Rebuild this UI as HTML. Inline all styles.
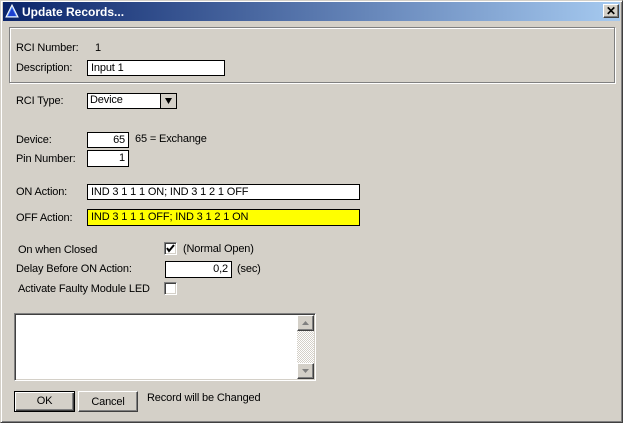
<!DOCTYPE html>
<html><head><style>
*{margin:0;padding:0;box-sizing:border-box}
body{width:623px;height:423px;background:#d4d0c8;font-family:"Liberation Sans",Arial,sans-serif;font-size:11px;letter-spacing:-0.15px;color:#000;position:relative;overflow:hidden}
.a{position:absolute;white-space:nowrap}
.win{position:absolute;left:0;top:0;width:623px;height:423px;border-top:1px solid #d4d0c8;border-left:1px solid #d4d0c8;border-right:1px solid #404040;border-bottom:1px solid #404040;box-shadow:inset 1px 1px #fff,inset -1px -1px #808080}
.title{position:absolute;left:3px;top:2px;width:617px;height:19px;background:linear-gradient(to right,#0a246a,#a6caf0);color:#fff;font-weight:bold;font-size:12px;letter-spacing:0}
.in{position:absolute;background:#fff;border-top:1px solid #808080;border-left:1px solid #808080;border-right:1px solid #fff;border-bottom:1px solid #fff;box-shadow:inset 1px 1px #404040,inset -1px -1px #d4d0c8}
.f{position:absolute;background:#fff;border:1px solid #000;padding:1px 3px;line-height:13px}
.btn{position:absolute;background:#d4d0c8;border-top:1px solid #fff;border-left:1px solid #fff;border-right:1px solid #404040;border-bottom:1px solid #404040;box-shadow:inset -1px -1px #808080;text-align:center;line-height:17px}
.cb{position:absolute;width:13px;height:13px;background:#fff;border-top:1px solid #808080;border-left:1px solid #808080;border-right:1px solid #fff;border-bottom:1px solid #fff;box-shadow:inset 1px 1px #404040,inset -1px -1px #d4d0c8}
</style></head><body>
<div class="win"></div>
<div class="title"><svg class="a" style="left:2px;top:2px" width="14" height="14"><polygon points="7,1 13,13 1,13" fill="#6aa0ff" stroke="#fff" stroke-width="1"/><polygon points="7,4 11,12 3,12" fill="#1c3fcf"/></svg><span class="a" style="left:19px;top:3px">Update Records...</span>
<div class="btn" style="left:600px;top:2px;width:16px;height:14px;line-height:12px;color:#000;font-size:12px">✕</div></div>
<div class="a" style="left:9px;top:27px;width:606px;height:56px;border:1px solid #808080;box-shadow:1px 1px #fff,inset 1px 1px #fff"></div>
<span class="a" style="left:16px;top:42px">RCI Number:</span><span class="a" style="left:95px;top:42px">1</span>
<span class="a" style="left:16px;top:62px">Description:</span>
<div class="f" style="left:87px;top:60px;width:138px;height:16px">Input 1</div>
<span class="a" style="left:16px;top:95px">RCI Type:</span>
<div class="f" style="left:87px;top:93px;width:90px;height:16px;padding:0 2px">Device</div>
<div class="a" style="left:160px;top:94px;width:16px;height:14px;border-left:1px solid #000;background:#d4d0c8"><svg width="16" height="14"><polygon points="4,4 11,4 7.5,10" fill="#000"/></svg></div>
<span class="a" style="left:16px;top:134px">Device:</span>
<div class="f" style="left:87px;top:132px;width:42px;height:16px;text-align:right">65</div>
<span class="a" style="left:135px;top:133px">65 = Exchange</span>
<span class="a" style="left:16px;top:153px">Pin Number:</span>
<div class="f" style="left:87px;top:150px;width:42px;height:17px;text-align:right">1</div>
<span class="a" style="left:16px;top:186px">ON Action:</span>
<div class="f" style="left:87px;top:184px;width:273px;height:16px">IND 3 1 1 1 ON; IND 3 1 2 1 OFF</div>
<span class="a" style="left:16px;top:212px">OFF Action:</span>
<div class="f" style="left:87px;top:209px;width:273px;height:17px;background:#ffff00">IND 3 1 1 1 OFF; IND 3 1 2 1 ON</div>
<span class="a" style="left:18px;top:244px">On when Closed</span>
<div class="cb" style="left:164px;top:242px"><svg class="a" style="left:1px;top:1px" width="9" height="9"><polyline points="1,4 3,7 8,1" fill="none" stroke="#000" stroke-width="2"/></svg></div>
<span class="a" style="left:183px;top:243px">(Normal Open)</span>
<span class="a" style="left:16px;top:263px">Delay Before ON Action:</span>
<div class="f" style="left:165px;top:261px;width:67px;height:17px;text-align:right">0,2</div>
<span class="a" style="left:237px;top:263px">(sec)</span>
<span class="a" style="left:18px;top:283px">Activate Faulty Module LED</span>
<div class="cb" style="left:164px;top:282px"></div>
<div class="in" style="left:14px;top:313px;width:302px;height:68px"></div>
<div class="a" style="left:297px;top:315px;width:17px;height:64px;background:repeating-conic-gradient(#fff 0 25%,#d4d0c8 0 50%) 0 0/2px 2px"></div>
<div class="btn" style="left:297px;top:315px;width:17px;height:16px"><svg class="a" style="left:4px;top:5px" width="8" height="5"><polygon points="0,4 7,4 3.5,0" fill="#808080"/></svg></div>
<div class="btn" style="left:297px;top:363px;width:17px;height:16px"><svg class="a" style="left:4px;top:5px" width="8" height="5"><polygon points="0,0 7,0 3.5,4" fill="#808080"/></svg></div>
<div class="btn" style="left:14px;top:391px;width:61px;height:21px;border:1px solid #000;box-shadow:inset 1px 1px #fff,inset -1px -1px #404040,inset -2px -2px #808080;line-height:19px">OK</div>
<div class="btn" style="left:78px;top:391px;width:60px;height:21px;line-height:20px">Cancel</div>
<span class="a" style="left:147px;top:392px">Record will be Changed</span>
</body></html>
